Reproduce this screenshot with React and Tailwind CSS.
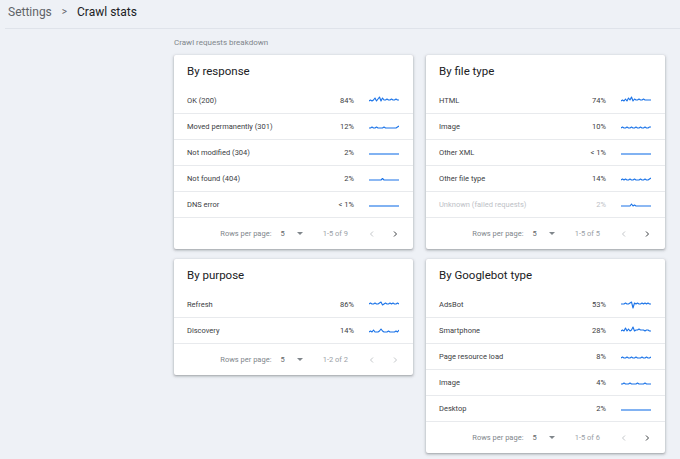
import React from 'react';

const flat = [4, 4, 4, 4, 4, 4, 4, 4, 4, 4, 4, 4, 4, 4, 4];

const CARDS = {
  response: {
    title: 'By response',
    rows: [
      { label: 'OK (200)', pct: '84%', spark: [5, 4, 5, 4, 2, 5, 3, 1, 5, 2, 4, 4, 3, 4, 4, 3, 4, 4, 3, 4, 4] },
      { label: 'Moved permanently (301)', pct: '12%', spark: [6, 6, 5, 6, 6, 5, 6, 6, 6, 6, 5, 6, 6, 6, 6, 6, 6, 6, 6, 5, 4] },
      { label: 'Not modified (304)', pct: '2%', spark: [6, 6, 6, 6, 6, 6, 6, 6, 6, 6, 6, 6, 6, 6, 6] },
      { label: 'Not found (404)', pct: '2%', spark: [6, 6, 6, 6, 6, 6, 6, 6, 6, 4.5, 6, 6, 6, 6, 6, 6, 6, 6, 6, 6, 6] },
      { label: 'DNS error', pct: '< 1%', spark: [6, 6, 6, 6, 6, 6, 6, 6, 6, 6, 6, 6, 6, 6, 6] },
    ],
    range: '1-5 of 9',
  },
  filetype: {
    title: 'By file type',
    rows: [
      { label: 'HTML', pct: '74%', spark: [5, 4, 5, 3, 5, 2, 4, 1, 5, 3, 4, 4, 3, 4, 4, 3, 4, 4, 4, 4, 4] },
      { label: 'Image', pct: '10%', spark: [6, 5, 6, 6, 5, 6, 6, 5, 6, 6, 5, 6, 6, 5, 6, 6, 5, 6, 6, 5, 5] },
      { label: 'Other XML', pct: '< 1%', spark: [6, 6, 6, 6, 6, 6, 6, 6, 6, 6, 6, 6, 6, 6, 6] },
      { label: 'Other file type', pct: '14%', spark: [6, 5, 6, 5, 6, 6, 5, 6, 6, 5, 6, 6, 6, 5, 6, 6, 5, 6, 6, 5, 4] },
      { label: 'Unknown (failed requests)', pct: '2%', muted: true, spark: [6, 6, 6, 6, 6, 6, 6, 4, 6, 5, 6, 6, 6, 6, 6, 6, 6, 6, 6, 6, 6] },
    ],
    range: '1-5 of 5',
  },
  purpose: {
    title: 'By purpose',
    rows: [
      { label: 'Refresh', pct: '86%', spark: [4, 3, 4, 4, 3, 4, 4, 3, 2, 5, 4, 3, 4, 4, 3, 4, 3, 4, 4, 3, 4] },
      { label: 'Discovery', pct: '14%', spark: [6, 5, 6, 4, 6, 6, 6, 5, 3, 5, 6, 6, 6, 5, 6, 6, 6, 6, 5, 6, 4] },
    ],
    range: '1-2 of 2',
  },
  googlebot: {
    title: 'By Googlebot type',
    rows: [
      { label: 'AdsBot', pct: '53%', spark: [4, 4, 4, 3, 4, 4, 3, 2, 8, 3, 4, 3, 4, 4, 3, 4, 3, 4, 3, 4, 4] },
      { label: 'Smartphone', pct: '28%', spark: [5, 4, 5, 2, 5, 3, 5, 4, 1, 5, 4, 4, 3, 4, 4, 4, 5, 4, 4, 5, 5] },
      { label: 'Page resource load', pct: '8%', spark: [6, 5, 6, 6, 5, 6, 6, 5, 6, 6, 5, 6, 6, 6, 5, 6, 6, 5, 6, 6, 5] },
      { label: 'Image', pct: '4%', spark: [6, 6, 5, 6, 6, 6, 5, 6, 6, 6, 6, 5, 6, 6, 6, 6, 5, 6, 6, 6, 6] },
      { label: 'Desktop', pct: '2%', spark: [6, 6, 6, 6, 6, 6, 6, 6, 6, 6, 6, 6, 6, 6, 6] },
    ],
    range: '1-5 of 6',
  },
};

function Sparkline({ data = flat }) {
  const step = 30 / (data.length - 1);
  const pts = data.map((v, i) => `${(i * step).toFixed(1)},${v}`).join(' ');
  return (
    <svg width="30" height="9" viewBox="0 0 30 9" className="shrink-0 block">
      <polyline points={pts} fill="none" stroke="#1a73e8" strokeWidth="1.1" strokeLinejoin="round" />
    </svg>
  );
}

function Card({ title, rows, range }) {
  const lastDisabled = range === '1-2 of 2';
  return (
    <div className="w-[239px] bg-white rounded-[2px] shadow-[0_1px_2px_rgba(60,64,67,0.3),0_1px_3px_1px_rgba(60,64,67,0.15)]">
      <div className="h-[33px] flex items-center px-[13px] text-[11.5px] text-[#202124]">{title}</div>
      {rows.map(r => (
        <div key={r.label} className="h-[26px] flex items-center pl-[13px] pr-[14px] border-b border-[#e8eaed] text-[7.5px]">
          <span className={`flex-1 ${r.muted ? 'text-[#bdc1c6]' : 'text-[#3c4043]'}`}>{r.label}</span>
          <span className={`text-right ${r.muted ? 'text-[#bdc1c6]' : 'text-[#3c4043]'}`}>{r.pct}</span>
          <div className="ml-[15px]">
            <Sparkline data={r.spark} />
          </div>
        </div>
      ))}
      <div className="h-[31px] flex items-center justify-end pr-[14px] text-[7.5px]">
        <span className="text-[#80868b]">Rows per page:</span>
        <span className="ml-[9px] text-[#5f6368]">5</span>
        <span className="ml-[12px] w-0 h-0 border-l-[3px] border-r-[3px] border-t-[3px] border-l-transparent border-r-transparent border-t-[#80868b]" />
        <span className="ml-[20px] text-[#9aa0a6]">{range}</span>
        <svg width="8" height="8" viewBox="0 0 8 8" className="ml-[20px]">
          <path d="M5 1.5 L2.5 4 L5 6.5" fill="none" stroke="#c4c7ca" strokeWidth="1" />
        </svg>
        <svg width="8" height="8" viewBox="0 0 8 8" className="ml-[15px]">
          <path d="M3 1.5 L5.5 4 L3 6.5" fill="none" stroke={lastDisabled ? '#c4c7ca' : '#3c4043'} strokeWidth="1" />
        </svg>
      </div>
    </div>
  );
}

export default function App() {
  return (
    <div className="w-[680px] h-[459px] overflow-hidden bg-[#eef1f6]" style={{ fontFamily: 'Roboto, "Noto Sans", sans-serif' }}>
      <div className="ml-[5px] h-[29px] pl-[3px] pb-[5px] flex items-center border-b border-[#dfe3ea] text-[12px]">
        <span className="text-[#5f6368]">Settings</span>
        <span className="mx-[10px] text-[#5f6368] text-[10px]">&gt;</span>
        <span className="text-[#202124]">Crawl stats</span>
      </div>
      <div className="pl-[174px] pt-[8px]">
        <div className="h-[12px] leading-[12px] text-[8px] text-[#80868b]">Crawl requests breakdown</div>
        <div className="mt-[6px] flex gap-[13px] items-start">
          <div className="flex flex-col gap-[10px]">
            <Card {...CARDS.response} />
            <Card {...CARDS.purpose} />
          </div>
          <div className="flex flex-col gap-[10px]">
            <Card {...CARDS.filetype} />
            <Card {...CARDS.googlebot} />
          </div>
        </div>
      </div>
    </div>
  );
}
